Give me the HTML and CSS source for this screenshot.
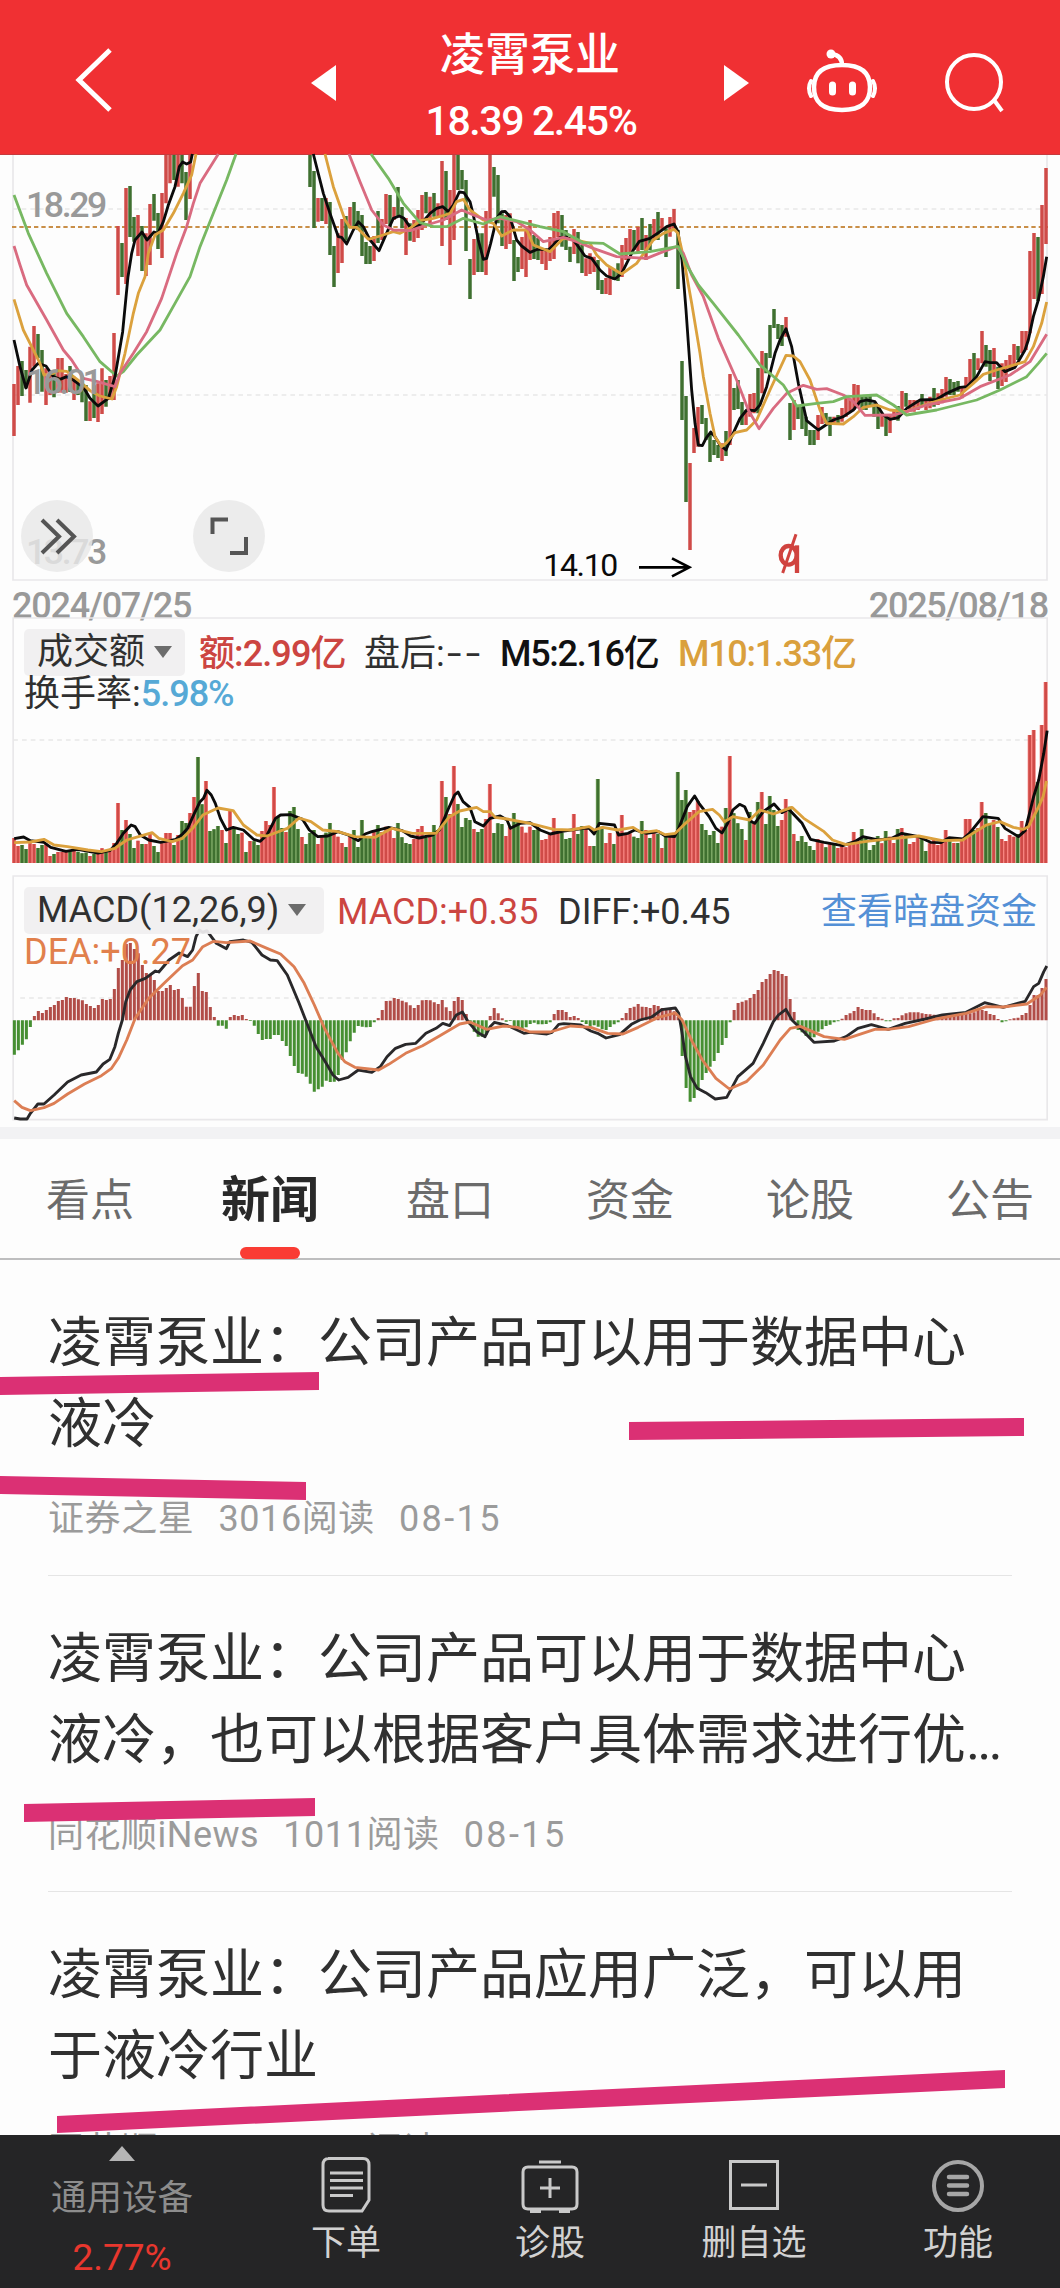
FILE: index.html
```html
<!DOCTYPE html>
<html lang="zh-CN">
<head>
<meta charset="utf-8">
<title>凌霄泵业</title>
<link rel="stylesheet" href="styles.css">
</head>
<body>
<div class="app">
  <header class="topbar">
    <svg class="back" width="44" height="70" viewBox="0 0 44 70"><path d="M38 5 7 35 38 65"/></svg>
    <svg class="prev" width="26" height="38" viewBox="0 0 26 38"><path d="M26 1V37L1 19z"/></svg>
    <div class="stock">
      <h1>凌霄泵业</h1>
      <p>18.39 2.45%</p>
    </div>
    <svg class="next" width="26" height="38" viewBox="0 0 26 38"><path d="M0 1V37L25 19z"/></svg>
    <svg class="robot" width="72" height="66" viewBox="0 0 72 66">
      <path d="M36 16C36 9 32 6 26 5M36 16C17 16 8 24 8 38S15 61 36 61 64 52 64 38 55 16 36 16z"/>
      <path d="M5 32Q1 39 5 47M67 32Q71 39 67 47" stroke-width="4"/>
      <circle cx="25" cy="5" r="4.500"/><path d="M26.500 36V43M46.500 36V43" stroke-width="7"/>
    </svg>
    <svg class="search" width="64" height="64" viewBox="0 0 64 64"><circle cx="30" cy="30" r="27"/><path d="M50 48 58 59"/></svg>
  </header>

  <section class="panel price">
    <svg class="plot" width="1060" height="427" viewBox="0 15 3180 1281">
      <path class="frame" d="M39 15V1290H3141V15"/>
      <path class="grid" d="M39 177H3141M39 735H3141"/>
      <path class="last" d="M36 231H3144"/>
      <g id="price-bars"></g>
      <g id="price-lines"></g>
      <g class="axis">
        <text x="78" y="201" textLength="244">18.29</text>
        <text x="78" y="733" textLength="230">16.01</text>
        <text x="78" y="1241" textLength="244">13.73</text>
      </g>
      <text class="low" x="1630" y="1278" textLength="225">14.10</text>
      <path class="arrow" d="M1917 1252H2068M2016 1225 2068 1252 2016 1279"/>
      <g class="exright"><ellipse cx="2366" cy="1216" rx="24" ry="28"/><path d="M2391 1186V1269"/><path d="M2388 1153 2348 1269" stroke-width="9"/></g>
    </svg>
    <button class="round more"><svg width="72" height="72" viewBox="0 0 72 72"><path d="M21 20 38 36.500 21 53M36 20 53 36.500 36 53"/></svg></button>
    <button class="round expand"><svg width="72" height="72" viewBox="0 0 72 72"><path d="M19.500 34V19.500H35M53 37V53H37"/></svg></button>
  </section>

  <div class="dates"><span>2024/07/25</span><span>2025/08/18</span></div>

  <section class="panel volume">
    <svg class="plot" width="1060" height="249" viewBox="0 18 3136 747" preserveAspectRatio="none">
      <path class="frame" d="M39 759V24H3098V759"/>
      <path class="grid" d="M39 390H3098"/>
      <g id="volume-bars"></g>
      <g id="volume-lines"></g>
    </svg>
    <div class="legend">
      <div class="row">
        <span class="chip vol-chip">成交额<i></i></span>
        <span class="red v1">额:2.99亿</span><span class="v2">盘后:<b>--</b></span><span class="black v3">M5:2.16亿</span><span class="gold v4">M10:1.33亿</span>
      </div>
      <div class="row second"><span>换手率:</span><span class="blue">5.98%</span></div>
    </div>
  </section>

  <section class="panel macd">
    <svg class="plot" width="1060" height="247" viewBox="0 12 3136 741" preserveAspectRatio="none">
      <path class="frame" d="M39 18H3098V749H39z"/>
      <path class="grid" d="M60 384H3098"/>
      <g id="macd-bars"></g>
      <g id="macd-lines"></g>
    </svg>
    <div class="legend">
      <div class="row">
        <span class="chip macd-chip">MACD(12,26,9)<i></i></span>
        <span class="red m1">MACD:+0.35</span><span class="m2">DIFF:+0.45</span><a class="link">查看暗盘资金</a>
      </div>
      <div class="row second"><span class="orange">DEA:+0.27</span></div>
    </div>
  </section>

  <nav class="tabs">
    <a>看点</a><a class="active">新闻</a><a>盘口</a><a>资金</a><a>论股</a><a>公告</a>
  </nav>

  <main class="news">
    <article>
      <h2>凌霄泵业：公司产品可以用于数据中心<br>液冷</h2>
      <p><span>证券之星</span><span>3016阅读</span><span class="day">08-15</span></p>
    </article>
    <article>
      <h2>凌霄泵业：公司产品可以用于数据中心<br>液冷，也可以根据客户具体需求进行优<span class="dots">...</span></h2>
      <p><span class="latin">同花顺iNews</span><span>1011阅读</span><span class="day">08-15</span></p>
    </article>
    <article>
      <h2>凌霄泵业：公司产品应用广泛，可以用<br>于液冷行业</h2>
      <p><span class="latin">同花顺iNews</span><span>1093阅读</span><span class="day">08-15</span></p>
    </article>
  </main>

  <svg class="marks" width="1060" height="2288" viewBox="0 0 1060 2288">
    <path d="M0 1377 319 1372V1390L0 1395zM629 1422 1024 1418V1436L629 1440zM0 1476 306 1482V1500L0 1494zM24 1804 315 1798V1816L24 1822zM57 2116 1005 2070V2088L57 2133z"/>
  </svg>

  <footer class="bottom">
    <div class="sector">
      <svg width="26" height="15" viewBox="0 0 26 15"><path d="M13 0 26 15H0z"/></svg>
      <span>通用设备</span><strong>2.77%</strong>
    </div>
    <a><svg width="60" height="56" viewBox="0 0 60 56"><path d="M12 1.500H47Q53 1.500 53 8V43L46 54H13Q7 54 7 48V8Q7 1.500 13 1.500zM14 16H47M14 23.500H47M14 31H47M14 38.500H37"/></svg>下单</a>
    <a><svg width="60" height="56" viewBox="0 0 60 56"><path d="M8 10H52Q57 10 57 15V47Q57 52 52 52H8Q3 52 3 47V15Q3 10 8 10zM19 5H41M30 21V41M20 31H40M10 54.500H21M39 54.500H50"/></svg>诊股</a>
    <a><svg width="60" height="56" viewBox="0 0 60 56"><path d="M6.500 4.500H53.500V51.500H6.500zM17 28H43"/></svg>删自选</a>
    <a class="func"><svg width="60" height="56" viewBox="0 0 60 56"><circle cx="30" cy="29" r="24"/><path d="M21 20H39M21 28.500H39M21 37H39" stroke-width="4.500" stroke-linecap="round"/></svg>功能</a>
  </footer>
</div>
<script src="charts.js"></script>
</body>
</html>
```

FILE: styles.css
```css
* { box-sizing: border-box; }
body { margin: 0; background: #fdfdfd; font-family: Roboto, "Noto Sans CJK SC", sans-serif; color: #303030; }
h1, h2, p { margin: 0; font-weight: 400; }
svg { display: block; fill: none; }
.app { position: relative; width: 1060px; height: 2288px; overflow: hidden; display: flex; flex-direction: column; }

.topbar { height: 155px; flex: none; background: #f03033; color: #fff; display: grid; grid-template-columns: 310px 26px 388px 26px 56px 72px 66px 64px; align-items: start; border-bottom: 1px solid #c63a3d; }
.topbar svg { stroke: #fff; stroke-width: 4; }
.topbar .back { margin: 45px 0 0 72px; stroke-width: 5; }
.topbar .prev, .topbar .next { margin-top: 64px; fill: #fff; stroke: none; }
.topbar .robot { grid-column: 6; margin-top: 49px; stroke-width: 4.500px; stroke-linecap: round; }
.topbar .robot circle { fill: #fff; stroke: none; }
.topbar .search { grid-column: 8; margin-top: 52px; }
.stock { text-align: center; padding-top: 26px; }
.stock h1 { font-size: 45px; line-height: 60px; font-weight: 500; }
.stock p { font-size: 41px; line-height: 48px; margin-top: 11px; font-weight: 500; letter-spacing: -1.400px; padding-left: 2px; }

.panel { position: relative; display: grid; flex: none; }
.panel > .plot, .panel > .legend { grid-area: 1 / 1; }
.price .plot { overflow: visible; }
.frame { stroke: #e9e8ea; stroke-width: 5; }
.grid { stroke: #e8e8e8; stroke-width: 4; stroke-dasharray: 14 12; }
.last { stroke: #c98f48; stroke-width: 6; stroke-dasharray: 13 9; }
.bar-red { stroke: #cf4b48; stroke-width: 10.500px; }
.bar-green { stroke: #3f7030; stroke-width: 10.500px; }
.volume-core { stroke-width: 8px; }
.tint-red { stroke: #f98783; stroke-width: 12; }
.tint-green { stroke: #85b06c; stroke-width: 12; }
.macd-up { stroke: #b14d48; stroke-width: 9; }
.macd-down { stroke: #468f32; stroke-width: 9; }
.line { stroke-width: 8.500; stroke-linejoin: round; }
.line.black { stroke: #0b0b0b; }
.line.dark { stroke: #29282a; }
.line.gold { stroke: #dba13d; }
.line.pink { stroke: #d96b80; }
.line.green { stroke: #77b862; }
.line.orange { stroke: #dc7e54; }
.axis { fill: #999; font-size: 107px; font-weight: 500; }
.low { fill: #0a0a0a; font-size: 96px; }
.arrow { stroke: #000; stroke-width: 8; }
.exright { stroke: #d0433f; stroke-width: 13; }

.round { position: absolute; top: 345px; width: 72px; height: 72px; border: 0; padding: 0; border-radius: 50%; background: rgba(232, 232, 232, .82); }
.round svg { stroke: #555; stroke-width: 4; }
.more { left: 21px; }
.expand { left: 193px; }

.dates { height: 34px; flex: none; display: flex; justify-content: space-between; padding: 0 12px; font-size: 36px; line-height: 49px; font-weight: 500; color: #999; letter-spacing: -1.250px; }

.volume { height: 249px; }
.macd { height: 256px; padding-top: 9px; }
.macd .plot { height: 247px; }
.legend { position: relative; font-size: 36px; line-height: 51px; white-space: nowrap; padding: 13px 24px 0; }
.row { display: flex; height: 47px; }
.row.second { height: 36px; line-height: 36px; }
.chip { display: flex; align-items: center; background: rgba(240, 239, 240, .93); border-radius: 5px; padding-left: 13px; }
.chip i { margin: 0 0 2px 9px; border: 9px solid transparent; border-top: 12px solid #6c6c6c; border-bottom: 0; }
.vol-chip { width: 161px; margin-right: 14px; }
.macd-chip { width: 300px; margin-right: 13px; }
.v1 { width: 165px; letter-spacing: -.9px; font-weight: 500; }
.v2 { width: 136px; }
.v2 b { display: inline-block; font-weight: 400; letter-spacing: 3px; margin-left: 2px; transform: scaleX(1.450); transform-origin: left; }
.v3 { width: 178px; letter-spacing: -1.300px; font-weight: 500; }
.v4 { letter-spacing: -1.300px; font-weight: 500; }
.m1 { width: 221px; }
.m2 { width: 263px; }
.red { color: #cc4541; }
.black { color: #111; }
.gold { color: #daa03d; }
.blue { color: #56a9d6; font-weight: 500; letter-spacing: -1px; }
.orange { color: #e1804c; }
.link { color: #5490d6; }

.tabs { flex: none; height: 133px; margin-top: 6px; border-top: 12px solid #f2f2f4; border-bottom: 2px solid #bebebf; display: grid; grid-template-columns: repeat(6, 180px); font-size: 44px; line-height: 124px; color: #6b6b6b; text-align: center; }
.tabs a { display: flex; flex-direction: column; align-items: center; height: 120px; }
.tabs .active { font-size: 49px; font-weight: 700; color: #292929; }
.tabs .active::after { content: ""; width: 60px; height: 12px; flex: none; margin-top: -16px; border-radius: 6px; background: #fa3c34; }

.news { flex: none; height: 875px; overflow: hidden; padding: 0 48px; }
.news article { height: 316px; padding-top: 43px; border-bottom: 1px solid #e5e5e5; }
.news h2 { font-size: 54px; line-height: 81px; white-space: nowrap; color: #303030; }
.news .dots { letter-spacing: -3px; }
.news p { display: flex; gap: 24px; font-size: 36px; line-height: 48px; margin-top: 30px; color: #9b9b9b; }
.news p span { letter-spacing: .6px; }
.news p .latin { letter-spacing: .5px; }
.news p .day { letter-spacing: 2.400px; }

.marks { position: absolute; left: 0; top: 0; fill: #db3074; pointer-events: none; }

.bottom { flex: none; position: relative; height: 153px; background: #252526; display: grid; grid-template-columns: 244px repeat(4, 204px); color: #d2d2d2; font-size: 35px; }
.bottom a, .sector { display: flex; flex-direction: column; align-items: center; }
.bottom a { padding-top: 22px; line-height: 50px; }
.bottom a svg { stroke: #c9c9c9; stroke-width: 3; margin-bottom: 6px; }
.bottom .func svg { stroke: #a6a6a6; stroke-width: 4; }
.sector { padding-top: 11px; color: #8d8d8d; font-size: 35.500px; }
.sector svg { fill: #b5b5b5; }
.sector span { line-height: 50px; margin-top: 12px; }
.sector strong { color: #e8372e; font-weight: 400; line-height: 50px; margin-top: 10px; font-size: 37px; }
```

FILE: charts.js
```js
// Each candle is "r|g top bottom"; groups start at the given slot.
const candles = {
  0: "r702 858,r648 765,g633 738,g660 715,r590 758,r528 650,g552 625,g600 725,r655 765,r665 735,g670 742,r624 728,r624 728,r672 728,g648 726,r680 750,g690 735,g695 757,g705 813,r754 813,g706 804,r700 816,r655 792,g690 770,r678 750,r549 750,r228 435,g279 381,r114 402,g108 261,g201 275,r195 318,g228 363,r250 378,r162 345,g132 212,g189 297,r129 324,r0 160,r0 100,g0 90,r0 110,g0 100,g66 210,r0 147",
  74: "g0 111,g63 234,r144 215,g144 213,r144 222,g156 315,g288 411,r250 369,r207 339,g198 272,r171 235,g156 235,g183 240,g195 318,g276 342,g288 342,r258 333,g183 279,r207 270,r132 222,g135 240,r171 210,g111 200,g171 235,r204 315,g220 272,r210 276,r180 264,r135 240,g126 190,r140 220,g129 200,r160 200,r33 288,g63 210,r120 345,r0 270,g0 120,g60 118,g90 303,g327 447,r267 375,g250 366,g250 366,r183 375,r0 220,g51 140,g75 220,g190 288,r195 297,r190 282,g270 393,g321 366,r261 357,r240 381,r210 330,g255 327,g264 330,r300 342,r300 360,r261 333,r189 327,r183 261,g195 290,g240 300,g290 336,r237 312,g246 340,g285 369,r325 378,r310 372,r320 366,g330 420,g390 432,r384 432,r350 435,g360 390,g340 393,r285 381,r264 330,r237 310,g240 300,r231 310,g204 300,r255 330,g222 300,r207 270,g186 270,r204 240,g235 321,r201 260,r177 240,g240 417,g633 810,g738 1056,r939 1200,r834 909,r771 890",
  172: "g765 822,g804 870,g850 936,g870 915,g885 924,r880 933,g843 918,r672 885,g714 780,g690 777,g756 825,r780 825,r732 800,r729 790,g654 790,r603 730,g609 670,g525 624,g477 534,g522 567,g525 588,r501 560,g759 870,r750 840,g770 807,g770 837,g800 858,g840 885,g840 885,r795 870,r771 822,g789 820,g800 858,r800 825,g795 825,r774 815,r741 800,r745 785,r702 780,r705 770,g735 780,g740 780,g735 770,g760 800,g770 837,r790 830,g800 858,r795 849,r780 810,g768 812,r723 790,g729 770,r750 785,r750 785,r750 780,g732 765,r750 780,r740 775,g714 770,r730 765,r717 760,r681 740,g687 735,g696 735,g693 725,r710 745,r681 720,r627 700,g609 690,r625 660,r543 640,g585 650,g600 693,r594 681,g650 717,r640 708,r630 696,r615 660,r582 650,g588 630,r543 610,r543 600,r303 550,r249 447,g261 453,r165 432,r54 282"
};

const volumes = "r684 r708 g705 g717 r700 r702 g714 g705 r703 r738 g732 r726 r726 r726 g723 r722 g725 g730 g728 r738 g732 r727 r715 g727 r722 r699 r579 g660 r630 g672 g714 r692 g702 r702 r670 g708 g726 r700 r669 r669 g705 r675 g633 g639 r609 r561 g441 g583 r513 g663 g658 g648 r660 g699 r597 g652 g672 r668 g726 r693 g694 g705 r663 r633 r645 r531 g621 g654 r666 g603 g591 g657 r681 g702 g669 g660 r702 r682 g668 g639 r665 r680 r699 g711 r680 g660 g711 g630 g684 g684 r660 g645 r666 r650 r660 r684 g639 g682 g699 g702 r687 r657 r648 g684 r672 g645 r660 r513 g561 r612 r468 g582 g651 g624 g630 r657 g666 g657 r627 r522 g669 g640 g642 r678 r650 g609 g633 r650 r668 r650 g660 g658 r690 r687 r670 r624 r668 g668 g687 g684 r612 g672 g648 r650 r708 g708 g507 g650 r699 r669 g702 r665 r615 r675 r670 g680 g684 g633 r660 g684 r670 g672 r714 g680 r672 r670 g486 g570 g540 r606 r600 r573 g642 g660 g675 g663 g699 r650 g594 r438 g610 g640 g657 r690 g606 r640 g576 r546 g642 g558 g600 g648 r630 r567 g590 r672 g693 g678 g696 g708 g720 r687 r700 g712 r702 g705 r714 r700 r712 r700 r666 r690 g657 g684 g720 g705 g678 r700 g663 r680 r699 g657 r654 g672 r702 r696 r680 g684 g723 r700 r690 r705 r695 r660 g690 r699 g699 r690 r627 r627 g660 r655 r576 g609 g645 r630 g651 r687 r693 r675 r680 g672 r633 r660 r375 r360 g516 r345 r216".split(" ");

const macd = "554 541 524 508 471 438 423 429 420 411 405 393 390 381 384 384 388 391 402 408 414 405 387 390 387 357 294 270 222 219 237 250 285 309 315 330 363 363 354 345 360 357 384 410 410 348 309 363 366 411 441 467 467 476 441 435 438 435 447 453 467 492 510 507 507 495 495 513 528 558 588 609 611 620 641 665 658 650 632 636 635 615 570 547 514 488 468 470 472 471 457 444 420 393 392 384 387 392 397 406 414 405 391 390 391 397 402 390 412 423 393 381 390 432 465 485 500 500 494 438 414 430 445 455 453 468 474 478 472 462 458 463 463 462 457 432 420 420 426 441 438 444 456 462 468 466 470 478 480 471 463 457 444 429 414 410 402 410 411 414 405 408 414 417 420 424 441 558 654 695 684 660 630 609 590 573 549 525 504 457 420 399 395 391 384 372 360 336 327 312 300 303 312 318 387 426 480 487 498 502 502 485 478 468 464 457 454 446 435 430 423 411 417 420 420 430 441 446 454 454 445 444 436 430 427 427 427 430 432 433 434 435 433 435 435 435 432 432 432 430 427 420 420 423 432 435 447 457 454 448 445 443 435 429 405 375 375 354 327".split(" ").map(Number);

// Line series: [colour, [x offset, points], ...]
const priceLines = [
  ["green", [0, "42,135 85,250 140,370 200,490 250,560 300,635 350,678 370,665 410,615 480,540 525,460 570,380 600,290 640,190 680,90 708,12"]],
  ["black", [0, "42,570 60,650 78,714 96,660 114,640 138,648 160,680 180,688 200,680 220,690 250,712 270,745 294,768 325,745 345,680 368,545 384,380 395,310 405,270 426,246 441,270 462,246 474,250 490,215 505,165 525,110 538,50 548,36 560,42 572,36 577,12"]],
  ["black", [900, "40,12 70,130 90,190 115,260 125,262 140,282 160,240 175,215 190,230 210,270 237,302 262,245 280,205 298,198 312,205 335,238 360,225 390,190 410,175 428,170 445,185 460,165 478,126 492,128 510,155 520,195 535,270 550,328 560,325 572,280 590,205 605,185 615,184 630,200 650,270 665,288 690,307 715,297 745,300 760,285 780,262 800,262 820,270 835,290 855,318 875,325 900,360 920,378 945,387 965,370 1000,300 1018,274 1050,265 1080,245 1100,230 1122,222 1134,245 1146,330 1158,480 1175,720 1185,820"], [1980, "115,885 127,887 138,865 152,846 165,860 180,885 198,900 215,860 240,805 260,780 285,782 300,765 320,710 345,610 360,570 378,536 395,590 415,700 440,812 475,840 520,810 550,800 580,780 600,755 620,750 645,755 670,795 690,808 715,803 740,775 780,750 830,748 860,730 900,712 920,710 950,680 975,635 990,638 1010,638 1035,665 1065,652 1095,600 1105,570 1120,500 1135,450 1150,380 1160,320"]],
  ["gold", [0, "42,448 70,540 95,590 120,640 132,675 160,670 170,662 200,664 240,695 270,722 300,738 336,747 350,710 375,610 400,490 415,430 435,380 445,310 465,255 490,240 520,190 550,130 575,75 588,12"]],
  ["gold", [900, "75,12 100,110 135,210 150,232 170,232 205,268 240,258 280,245 300,250 330,235 360,212 400,205 435,195 450,190 470,155 490,148 510,180 550,210 580,220 605,258 640,240 680,240 700,285 750,305 790,265 830,270 870,280 890,315 920,345 965,372 1010,340 1060,270 1090,250 1122,238 1134,250 1150,320 1175,460"], [1980, "120,610 130,680 150,790 165,860 185,890 200,878 225,848 260,840 290,810 330,720 378,616 400,618 420,635 450,690 480,780 500,820 550,822 580,800 610,772 650,765 690,780 740,785 780,770 840,750 900,735 940,700 970,673 1010,660 1095,635 1120,590 1145,520 1160,456"]],
  ["pink", [0, "42,288 60,345 80,405 140,510 190,600 215,630 250,685 290,694 345,710 360,670 400,610 440,545 485,445 530,310 560,230 580,160 600,100 655,12"]],
  ["pink", [900, "147,12 180,95 215,180 250,225 280,240 330,242 380,225 430,210 485,180 520,195 560,210 600,205 650,215 690,240 730,275 790,262 830,275 880,295 950,320 1040,325 1090,305 1130,290"], [1980, "70,310 95,375 130,440 175,565 230,690 265,780 297,836 340,775 380,730 430,706 470,718 500,716 550,735 580,755 615,796 700,795 740,785 800,765 900,745 960,710 1050,675 1110,635 1160,553"]],
  ["green", [900, "213,12 265,85 310,160 360,218 400,230 440,230 490,205 550,222 600,200 660,215 720,230 790,245 850,278 910,280 960,312 1050,305 1130,290"], [1980, "55,290 80,345 115,405 160,460 235,555 300,645 370,705 410,768 470,760 520,755 560,740 650,735 700,765 740,795 830,780 950,750 1020,720 1100,680 1135,640 1160,610"]]
];

const volumeLines = [
  ["black", [0, "42,686 70,681 90,692 130,697 150,712 195,724 230,718 290,729 325,722 345,700 365,670 388,645 400,650 415,675 440,690 475,697 520,688 540,672 555,655 575,610 592,575 602,565 612,541 625,555 637,580 652,625 670,660 690,652 720,660 750,688 770,694 790,675 815,625 830,615 860,614 895,628 915,660 940,680 970,678 1000,665 1030,675 1060,692 1080,672 1100,665 1150,652 1190,662 1215,678 1240,684 1280,675 1300,660 1325,600 1345,555 1355,546 1370,575 1390,592 1405,635 1430,648 1450,625 1480,618 1500,630 1510,655 1540,640"], [1568, "0,638 30,660 60,672 100,663 160,655 175,655 190,672 205,640 250,645 262,675 290,670 310,660 345,670 380,665 400,678 428,680 440,655 465,590 487,558 500,580 530,620 550,655 568,669 585,640 600,600 620,583 635,590 655,635 665,640 690,605 722,582 745,608 765,597 805,640 830,688 870,697 925,707 960,695 985,680 1030,690 1070,685 1100,670 1150,680 1185,697 1215,698 1240,683 1280,687 1300,670 1340,620 1385,625 1405,655 1445,680 1465,662 1490,560 1505,510 1520,430 1530,362"]],
  ["gold", [0, "42,698 90,696 130,688 160,705 200,710 260,720 300,725 340,715 375,690 410,680 450,668 470,685 510,695 540,685 570,655 600,615 645,594 690,602 720,645 760,675 790,678 850,655 885,624 920,635 955,660 1000,665 1050,680 1110,682 1160,655 1220,670 1290,670 1330,620 1360,603 1410,592 1430,605 1450,605 1465,622 1500,627"], [1568, "0,640 70,658 120,660 175,650 190,660 215,652 260,660 305,652 330,668 375,662 400,674 430,670 460,640 500,605 540,598 560,615 575,635 600,620 650,630 680,600 720,612 775,592 810,625 870,665 895,690 935,704 990,695 1050,688 1150,678 1220,692 1280,690 1310,670 1350,645 1390,635 1430,652 1460,658 1475,650 1505,590 1518,560 1528,513"]]
];

const macdLines = [
  ["dark", [0, "42,744 60,747 80,747 90,730 112,702 130,702 160,675 200,636 240,615 285,606 305,582 325,568 340,530 350,490 362,450 372,395 385,360 405,335 430,325 460,303 470,306 500,270 530,249 555,260 570,240 580,200 590,180 600,187 612,182 625,200 640,220 670,236 680,215 720,210 745,217 775,255 800,270 820,272 850,315 885,400 910,465 935,530 965,580 985,615 1002,630 1030,622 1060,600 1100,607 1125,590 1145,560 1170,535 1200,523 1230,520 1260,490 1290,475 1310,460 1330,467 1350,435 1368,426 1385,455 1410,485 1435,500 1450,470 1463,457 1500,466 1530,480 1550,490"], [1568, "0,487 50,492 65,487 85,463 100,461 150,465 180,483 200,490 225,504 265,494 300,463 325,450 360,441 390,419 430,414 440,430 450,490 460,560 475,620 495,655 520,668 548,687 582,682 615,620 660,580 690,520 720,455 735,435 757,418 775,450 800,475 840,517 900,513 935,500 970,475 1010,464 1060,478 1110,460 1170,447 1220,435 1290,427 1345,398 1400,412 1465,394 1490,350 1505,340 1520,305 1529,288"]],
  ["orange", [0, "42,692 65,712 90,722 130,713 160,700 200,672 250,642 300,617 330,595 350,565 375,510 400,445 440,385 490,335 540,287 570,270 600,230 632,214 670,218 740,213 790,235 830,252 870,290 900,340 930,405 960,475 1000,550 1020,575 1050,592 1120,600 1150,583 1200,550 1250,527 1300,498 1360,462 1390,456 1440,478 1490,468 1530,472"], [1568, "0,486 60,486 120,468 180,472 230,490 275,492 320,472 380,442 430,429 450,450 480,515 510,570 550,625 590,657 640,635 690,585 740,510 770,475 800,469 870,500 930,508 1020,478 1060,478 1120,470 1200,447 1290,430 1350,410 1400,411 1470,402 1510,375 1528,352"]]
];

const NS = "http://www.w3.org/2000/svg";

function addPath(id, d, cls) {
  const p = document.createElementNS(NS, "path");
  p.setAttribute("d", d);
  p.setAttribute("class", cls);
  document.getElementById(id).appendChild(p);
}

function drawLines(id, series) {
  for (const [colour, ...parts] of series) {
    const pts = parts.flatMap(([dx, text]) => text.split(" ").map(s => {
      const [x, y] = s.split(",").map(Number);
      return (x + dx) + " " + y;
    }));
    addPath(id, "M" + pts.join("L"), "line " + colour);
  }
}

const candlePaths = { r: "", g: "" };
for (const start in candles) {
  candles[start].split(",").forEach((c, i) => {
    const [top, bottom] = c.slice(1).split(" ");
    candlePaths[c[0]] += `M${42 + 12 * (Number(start) + i)} ${Math.max(15, top)}V${bottom}`;
  });
}
addPath("price-bars", candlePaths.r, "bar-red");
addPath("price-bars", candlePaths.g, "bar-green");

const volumePaths = { r: "", g: "" };
volumes.forEach((v, i) => { volumePaths[v[0]] += `M${(41.5 + 11.83 * i).toFixed(1)} 759V${v.slice(1)}`; });
addPath("volume-bars", volumePaths.r, "tint-red");
addPath("volume-bars", volumePaths.g, "tint-green");
addPath("volume-bars", volumePaths.r, "bar-red volume-core");
addPath("volume-bars", volumePaths.g, "bar-green volume-core");

const macdPaths = { up: "", down: "" };
macd.forEach((y, i) => { macdPaths[y < 451 ? "up" : "down"] += `M${(42.5 + 11.83 * i).toFixed(1)} 451V${y}`; });
addPath("macd-bars", macdPaths.up, "macd-up");
addPath("macd-bars", macdPaths.down, "macd-down");

drawLines("price-lines", priceLines);
drawLines("volume-lines", volumeLines);
drawLines("macd-lines", macdLines);
```
